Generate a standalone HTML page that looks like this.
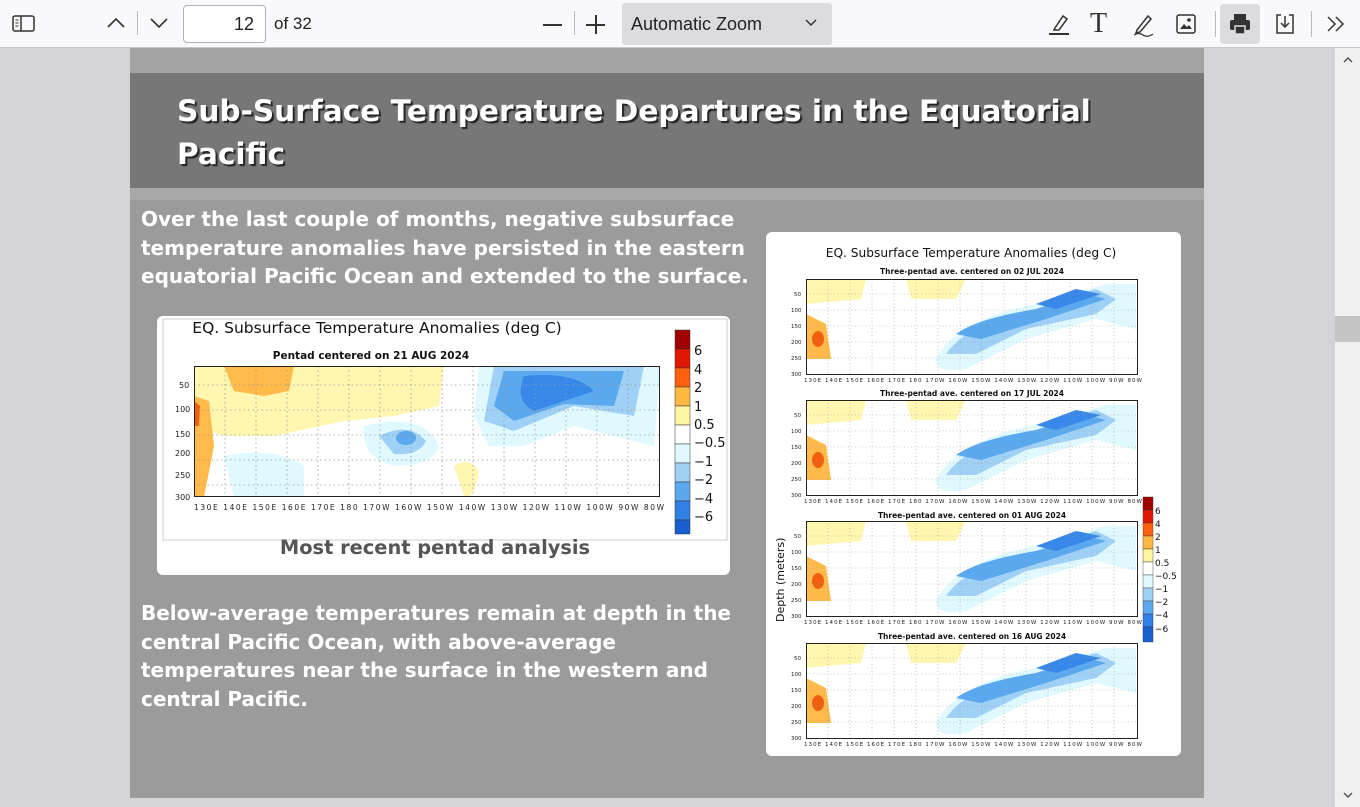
<!DOCTYPE html>
<html><head><meta charset="utf-8"><style>
*{margin:0;padding:0;box-sizing:border-box}
body{width:1360px;height:807px;overflow:hidden;background:#d4d4d7;font-family:"Liberation Sans",sans-serif;position:relative}
.tb{position:absolute;left:0;top:0;width:1360px;height:48px;background:#f9f9fb;border-bottom:1px solid #c8c8cc}
.ic{position:absolute;top:12px}
.page{position:absolute;left:130px;top:48px;width:1074px;height:750px;background:#9b9b9b}
.t{position:absolute;color:#fff;font-weight:bold;font-family:"DejaVu Sans",sans-serif;white-space:nowrap}
.box{position:absolute;background:#fff;border-radius:6px}
</style></head><body>
<div class="tb">
 <svg class="ic" style="left:12px;top:14px" width="24" height="20" viewBox="0 0 24 20"><rect x="1" y="2" width="21" height="15" rx="2" fill="none" stroke="#333" stroke-width="1.5"/><line x1="9" y1="2" x2="9" y2="17" stroke="#333" stroke-width="1.5"/><line x1="3.5" y1="6" x2="6.5" y2="6" stroke="#333"/><line x1="3.5" y1="9" x2="6.5" y2="9" stroke="#333"/><line x1="3.5" y1="12" x2="6.5" y2="12" stroke="#333"/></svg>
 <svg class="ic" style="left:106px;top:16px" width="20" height="14"><path d="M2 11 L10 3 L18 11" fill="none" stroke="#333" stroke-width="1.6"/></svg>
 <div style="position:absolute;left:137px;top:11px;width:1px;height:24px;background:#bbb"></div>
 <svg class="ic" style="left:149px;top:16px" width="20" height="14"><path d="M2 3 L10 11 L18 3" fill="none" stroke="#333" stroke-width="1.6"/></svg>
 <div style="position:absolute;left:183px;top:5px;width:83px;height:38px;border:1px solid #b0b0b6;border-radius:4px;background:#fff;font-size:18px;text-align:right;padding:8px 11px 0 0;color:#222">12</div>
 <div style="position:absolute;left:274px;top:14px;font-size:17px;color:#222">of 32</div>
 <div style="position:absolute;left:543px;top:24px;width:19px;height:1.6px;background:#333"></div>
 <div style="position:absolute;left:574px;top:11px;width:1px;height:24px;background:#bbb"></div>
 <div style="position:absolute;left:586px;top:24px;width:19px;height:1.6px;background:#333"></div>
 <div style="position:absolute;left:595px;top:15px;width:1.6px;height:19px;background:#333"></div>
 <div style="position:absolute;left:622px;top:3px;width:210px;height:42px;background:#dcdce0;border-radius:3px;font-size:18px;color:#222;padding:11px 0 0 9px">Automatic Zoom</div>
 <svg class="ic" style="left:804px;top:18px" width="14" height="10"><path d="M2 2 L7 7 L12 2" fill="none" stroke="#333" stroke-width="1.5"/></svg>
 <svg class="ic" style="left:1047px;top:11px" width="26" height="26"><path d="M8 17 L16 5 L20 8 L12 19 L7 19Z" fill="none" stroke="#333" stroke-width="1.5"/><line x1="2" y1="23" x2="22" y2="23" stroke="#333" stroke-width="2"/></svg>
 <div style="position:absolute;left:1090px;top:8px;font-size:28px;color:#333;font-family:'Liberation Serif',serif">T</div>
 <svg class="ic" style="left:1131px;top:11px" width="26" height="26"><path d="M6 19 L17 5 L20 8 L9 21 L5 22Z" fill="none" stroke="#333" stroke-width="1.5"/><path d="M3 24 Q8 21 12 24 T22 23" fill="none" stroke="#333" stroke-width="1.2"/></svg>
 <svg class="ic" style="left:1175px;top:13px" width="22" height="22"><rect x="2" y="2" width="18" height="18" rx="2" fill="none" stroke="#333" stroke-width="1.5"/><path d="M5 16 L9 11 L12 14 L14 12 L17 16Z" fill="#333"/><circle cx="14" cy="7" r="1.8" fill="#333"/></svg>
 <div style="position:absolute;left:1215px;top:11px;width:1px;height:26px;background:#bbb"></div>
 <div style="position:absolute;left:1220px;top:4px;width:40px;height:40px;background:#dcdce0;border-radius:4px"></div>
 <svg class="ic" style="left:1228px;top:12px" width="24" height="24"><rect x="6" y="2" width="12" height="6" fill="#333"/><rect x="2" y="8" width="20" height="10" rx="2" fill="#333"/><rect x="7" y="14" width="10" height="8" fill="#333" stroke="#dcdce0" stroke-width="1.5"/></svg>
 <svg class="ic" style="left:1273px;top:12px" width="24" height="24"><path d="M8 3 H4 V21 H20 V3 H16" fill="none" stroke="#333" stroke-width="1.5"/><path d="M12 4 V15 M8 11 L12 15 L16 11" fill="none" stroke="#333" stroke-width="1.5"/></svg>
 <div style="position:absolute;left:1311px;top:11px;width:1px;height:26px;background:#bbb"></div>
 <svg class="ic" style="left:1325px;top:14px" width="22" height="20"><path d="M3 3 L10 10 L3 17 M11 3 L18 10 L11 17" fill="none" stroke="#333" stroke-width="1.5"/></svg>
</div>

<div class="page">
 <div style="position:absolute;left:0;top:0;width:1074px;height:25px;background:#a3a3a3"></div>
 <div style="position:absolute;left:0;top:25px;width:1074px;height:115px;background:#777"></div>
 <div style="position:absolute;left:0;top:140px;width:1074px;height:12px;background:#a8a8a8"></div>
 <div class="t" style="left:47px;top:42px;font-size:29.6px;line-height:43px;text-shadow:2px 2px 1px #222">Sub-Surface Temperature Departures in the Equatorial<br>Pacific</div>
 <div class="t" style="left:11px;top:157px;font-size:20px;line-height:28.7px">Over the last couple of months, negative subsurface<br>temperature anomalies have persisted in the eastern<br>equatorial Pacific Ocean and extended to the surface.</div>
 <div class="t" style="left:11px;top:551px;font-size:20px;line-height:28.7px">Below-average temperatures remain at depth in the<br>central Pacific Ocean, with above-average<br>temperatures near the surface in the western and<br>central Pacific.</div>
</div>

<!-- left chart -->
<div class="box" style="left:157px;top:316px;width:573px;height:259px">
<svg width="573" height="259" style="position:absolute;left:0;top:0">
 <rect x="6" y="3" width="564" height="221" fill="#fff" stroke="#ccc"/>
 <text x="220" y="17" font-family="DejaVu Sans" font-size="15.5" text-anchor="middle" fill="#111">EQ. Subsurface Temperature Anomalies (deg C)</text>
 <text x="214" y="43" font-family="DejaVu Sans" font-size="10.5" font-weight="bold" text-anchor="middle" fill="#111">Pentad centered on 21 AUG 2024</text>
 <svg x="37" y="50" width="466" height="131" viewBox="0 0 466 131">
  <rect width="466" height="131" fill="#fff"/>
  <path d="M0 0 H250 L245 40 L200 50 L150 55 L80 70 L30 70 L0 60Z" fill="#fff6b0"/>
  <path d="M30 0 H100 L95 25 L70 30 L40 25Z" fill="#ffba4a"/>
  <path d="M0 30 L15 35 L20 80 L10 131 L0 131Z" fill="#ffba4a"/>
  <path d="M0 35 L6 40 L5 60 L0 60Z" fill="#f06010"/>
  <path d="M260 100 Q275 90 285 105 Q280 135 270 130Z" fill="#fff6b0"/>
  <path d="M30 90 Q80 80 110 100 L110 131 L40 131Z" fill="#dff9ff"/>
  <path d="M170 60 Q230 45 245 80 Q240 100 200 100 Q165 90 170 60Z" fill="#dff9ff"/>
  <path d="M185 70 Q215 55 232 75 Q225 90 200 88Z" fill="#9fd0f5"/>
  <ellipse cx="212" cy="72" rx="10" ry="7" fill="#5aa8ee"/>
  <path d="M285 0 H466 L460 80 L380 60 L330 80 L295 80 L280 50Z" fill="#dff9ff"/>
  <path d="M300 0 H450 L440 50 L380 40 L320 65 L290 55Z" fill="#9fd0f5"/>
  <path d="M310 5 H430 L420 40 L370 38 L320 55 L300 40Z" fill="#5aa8ee"/>
  <path d="M330 10 Q380 5 400 25 L340 45 Q320 35 330 10Z" fill="#3888ea"/>
  <g stroke="#999" stroke-dasharray="1.5 3" stroke-width="0.8">
   <line x1="0" y1="19" x2="466" y2="19"/><line x1="0" y1="44" x2="466" y2="44"/><line x1="0" y1="69" x2="466" y2="69"/><line x1="0" y1="94" x2="466" y2="94"/><line x1="0" y1="119" x2="466" y2="119"/>
   <line x1="31" y1="0" x2="31" y2="131"/><line x1="62" y1="0" x2="62" y2="131"/><line x1="93" y1="0" x2="93" y2="131"/><line x1="124" y1="0" x2="124" y2="131"/><line x1="155" y1="0" x2="155" y2="131"/><line x1="186" y1="0" x2="186" y2="131"/><line x1="217" y1="0" x2="217" y2="131"/><line x1="248" y1="0" x2="248" y2="131"/><line x1="279" y1="0" x2="279" y2="131"/><line x1="310" y1="0" x2="310" y2="131"/><line x1="341" y1="0" x2="341" y2="131"/><line x1="372" y1="0" x2="372" y2="131"/><line x1="403" y1="0" x2="403" y2="131"/><line x1="434" y1="0" x2="434" y2="131"/>
  </g>
  <rect x="0.5" y="0.5" width="465" height="130" fill="none" stroke="#222"/>
 </svg>
 <g font-family="DejaVu Sans" font-size="8" fill="#222"><text x="22" y="72">50</text><text x="18" y="96">100</text><text x="18" y="121">150</text><text x="18" y="140">200</text><text x="18" y="162">250</text><text x="18" y="184">300</text></g>
 <text x="37" y="194" font-family="DejaVu Sans" font-size="7.5" fill="#222" textLength="470">130E   140E   150E   160E   170E    180    170W   160W   150W   140W   130W   120W   110W   100W    90W    80W</text>
 <g stroke="#333" stroke-width="0.5">
  <rect x="518" y="14" width="15" height="19" fill="#a00000"/><rect x="518" y="33" width="15" height="19" fill="#e01800"/><rect x="518" y="52" width="15" height="19" fill="#ff6010"/><rect x="518" y="71" width="15" height="19" fill="#ffb840"/><rect x="518" y="90" width="15" height="19" fill="#fff4a0"/><rect x="518" y="109" width="15" height="19" fill="#fff"/><rect x="518" y="128" width="15" height="19" fill="#dff9ff"/><rect x="518" y="147" width="15" height="19" fill="#9fd0f5"/><rect x="518" y="166" width="15" height="19" fill="#5aa8ee"/><rect x="518" y="185" width="15" height="19" fill="#3080e8"/><rect x="518" y="204" width="15" height="14" fill="#1860d0"/>
 </g>
 <g font-family="DejaVu Sans" font-size="13" fill="#111"><text x="537" y="39">6</text><text x="537" y="58">4</text><text x="537" y="76">2</text><text x="537" y="95">1</text><text x="537" y="113">0.5</text><text x="537" y="131">−0.5</text><text x="537" y="150">−1</text><text x="537" y="168">−2</text><text x="537" y="187">−4</text><text x="537" y="205">−6</text></g>
 <text x="278" y="238" font-family="DejaVu Sans" font-weight="bold" font-size="19.4" fill="#555" text-anchor="middle">Most recent pentad analysis</text>
</svg>
</div>

<!-- right chart -->
<div class="box" style="left:766px;top:232px;width:415px;height:524px">
<svg width="415" height="524">
 <text x="205" y="25" font-family="DejaVu Sans" font-size="12.2" text-anchor="middle" fill="#111">EQ. Subsurface Temperature Anomalies (deg C)</text>
 <defs>
  <g id="pl">
   <rect width="332" height="96" fill="#fff"/>
   <path d="M0 0 H60 L55 20 L0 25Z" fill="#fff6b0"/>
   <path d="M100 0 H160 L150 20 L105 20Z" fill="#fff6b0"/>
   <path d="M0 35 L20 45 L25 80 L0 80Z" fill="#ffba4a"/>
   <ellipse cx="12" cy="60" rx="6" ry="8" fill="#f06010"/>
   <path d="M130 80 Q150 40 230 25 L300 5 H330 V50 L290 40 L220 60 L160 90 Q130 95 130 80Z" fill="#dff9ff"/>
   <path d="M140 75 Q160 45 230 30 L290 10 L310 20 L290 35 L220 50 L170 75Z" fill="#9fd0f5"/>
   <path d="M150 55 Q170 40 230 30 L280 15 L300 20 L240 40 L175 60Z" fill="#5aa8ee"/>
   <path d="M230 25 L270 10 L295 15 L250 30Z" fill="#3888ea"/>
   <g stroke="#999" stroke-dasharray="1 2.5" stroke-width="0.6">
    <line x1="0" y1="15" x2="332" y2="15"/><line x1="0" y1="31" x2="332" y2="31"/><line x1="0" y1="47" x2="332" y2="47"/><line x1="0" y1="63" x2="332" y2="63"/><line x1="0" y1="79" x2="332" y2="79"/>
    <line x1="22" y1="0" x2="22" y2="96"/><line x1="44" y1="0" x2="44" y2="96"/><line x1="66" y1="0" x2="66" y2="96"/><line x1="88" y1="0" x2="88" y2="96"/><line x1="110" y1="0" x2="110" y2="96"/><line x1="132" y1="0" x2="132" y2="96"/><line x1="154" y1="0" x2="154" y2="96"/><line x1="176" y1="0" x2="176" y2="96"/><line x1="198" y1="0" x2="198" y2="96"/><line x1="220" y1="0" x2="220" y2="96"/><line x1="242" y1="0" x2="242" y2="96"/><line x1="264" y1="0" x2="264" y2="96"/><line x1="286" y1="0" x2="286" y2="96"/><line x1="308" y1="0" x2="308" y2="96"/>
   </g>
   <rect x="0.5" y="0.5" width="331" height="95" fill="none" stroke="#222"/>
   <text x="-2" y="103" font-family="DejaVu Sans" font-size="5.5" fill="#222" textLength="338">130E  140E  150E  160E  170E   180  170W  160W  150W  140W  130W  120W  110W  100W  90W  80W</text>
   <g font-family="DejaVu Sans" font-size="5.5" fill="#222"><text x="-12" y="17">50</text><text x="-15" y="33">100</text><text x="-15" y="49">150</text><text x="-15" y="65">200</text><text x="-15" y="81">250</text><text x="-15" y="97">300</text></g>
  </g>
 </defs>
 <g font-family="DejaVu Sans" font-size="7.5" font-weight="bold" fill="#111" text-anchor="middle">
  <text x="206" y="42">Three-pentad ave. centered on 02 JUL 2024</text>
  <text x="206" y="164">Three-pentad ave. centered on 17 JUL 2024</text>
  <text x="206" y="286">Three-pentad ave. centered on 01 AUG 2024</text>
  <text x="206" y="407">Three-pentad ave. centered on 16 AUG 2024</text>
 </g>
 <use href="#pl" x="40" y="47"/>
 <use href="#pl" x="40" y="168"/>
 <use href="#pl" x="40" y="289"/>
 <use href="#pl" x="40" y="411"/>
 <text transform="translate(18,390) rotate(-90)" font-family="DejaVu Sans" font-size="11" fill="#111">Depth (meters)</text>
 <g stroke="#333" stroke-width="0.4">
  <rect x="377" y="265" width="10" height="13" fill="#a00000"/><rect x="377" y="278" width="10" height="13" fill="#e01800"/><rect x="377" y="291" width="10" height="13" fill="#ff6010"/><rect x="377" y="304" width="10" height="13" fill="#ffb840"/><rect x="377" y="317" width="10" height="13" fill="#fff4a0"/><rect x="377" y="330" width="10" height="13" fill="#fff"/><rect x="377" y="343" width="10" height="13" fill="#dff9ff"/><rect x="377" y="356" width="10" height="13" fill="#9fd0f5"/><rect x="377" y="369" width="10" height="13" fill="#5aa8ee"/><rect x="377" y="382" width="10" height="13" fill="#3080e8"/><rect x="377" y="395" width="10" height="15" fill="#1860d0"/>
 </g>
 <g font-family="DejaVu Sans" font-size="9" fill="#111"><text x="389" y="282">6</text><text x="389" y="295">4</text><text x="389" y="308">2</text><text x="389" y="321">1</text><text x="389" y="334">0.5</text><text x="389" y="347">−0.5</text><text x="389" y="360">−1</text><text x="389" y="373">−2</text><text x="389" y="386">−4</text><text x="389" y="400">−6</text></g>
</svg>
</div>

<!-- scrollbar -->
<div style="position:absolute;left:1335px;top:48px;width:25px;height:759px;background:#f0f0f0"></div>
<div style="position:absolute;left:1335px;top:316px;width:25px;height:26px;background:#c4c4c4"></div>
<svg style="position:absolute;left:1342px;top:55px" width="12" height="10"><path d="M2 7 L6 3 L10 7" fill="none" stroke="#555" stroke-width="1.5"/></svg>
<svg style="position:absolute;left:1342px;top:790px" width="12" height="10"><path d="M2 3 L6 7 L10 3" fill="none" stroke="#555" stroke-width="1.5"/></svg>
</body></html>
